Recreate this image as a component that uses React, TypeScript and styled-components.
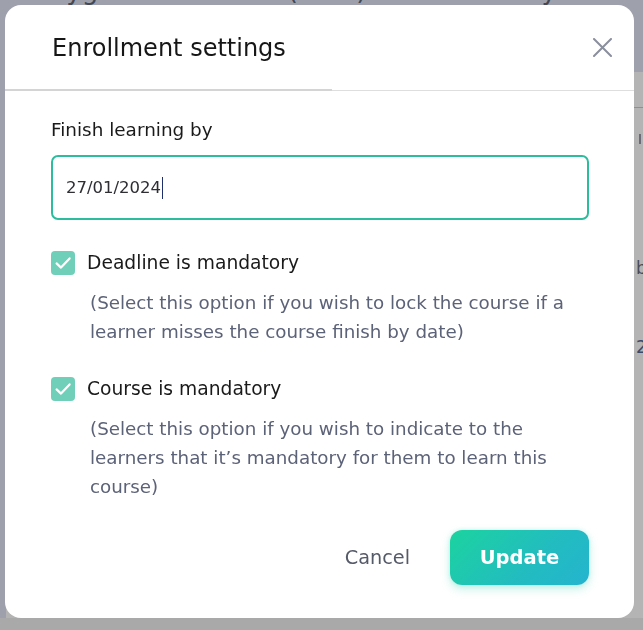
import React from "react";
import styled, { createGlobalStyle } from "styled-components";

const GlobalStyle = createGlobalStyle`
  html, body { margin: 0; padding: 0; }
  body {
    width: 643px;
    height: 630px;
    overflow: hidden;
    font-family: "DejaVu Sans", "Noto Sans", Arial, sans-serif;
  }
  * { box-sizing: border-box; }
`;

/* ---------- page behind the dialog (already dimmed) ---------- */
const Page = styled.div`
  width: 643px;
  height: 630px;
  display: grid;
  grid-template-columns: 6px 628px 1fr;
  grid-template-rows: 72px 546px 1fr;
  background: #a9a9aa;
  overflow: hidden;
`;

const TopBand = styled.div`
  grid-column: 1 / -1;
  grid-row: 1;
  background: #9ea1ab;
  overflow: hidden;
  white-space: nowrap;
`;

const PageHeading = styled.h1`
  margin: -27px 0 0 -30px;
  font-family: "DejaVu Sans", Arial, sans-serif;
  font-size: 26px;
  line-height: 34px;
  font-weight: 400;
  color: #454853;
`;

const LeftRail = styled.div`
  grid-column: 1;
  grid-row: 2;
  background: #9ea1ab;
`;

const MainArea = styled.div`
  grid-column: 2;
  grid-row: 2;
  background: #b4b4b4;
`;

const SidePanel = styled.div`
  grid-column: 3;
  grid-row: 2;
  background: #b4b4b4;
  display: flex;
  flex-direction: column;
  padding-top: 35px;
  overflow: hidden;
  white-space: nowrap;
`;

const SideRule = styled.div`
  height: 1px;
  background: #8f8f92;
`;

const SideTick = styled.div`
  margin: 26px 0 0 5px;
  width: 2px;
  height: 10px;
  background: #6a6d78;
`;

const SideText = styled.div<{ $top: number; $color?: string }>`
  margin-top: ${(p) => p.$top}px;
  padding-left: 2px;
  font-size: 17px;
  color: ${(p) => p.$color || "#4a4c55"};
  line-height: 20px;
`;

const BottomStrip = styled.div`
  grid-column: 1 / -1;
  grid-row: 3;
  background: #a9a9aa;
`;

/* ---------- overlay + dialog ---------- */
const Overlay = styled.div`
  position: fixed;
  inset: 0;
  padding: 5px 9px 12px 5px;
  display: flex;
`;

const Dialog = styled.div`
  flex: 1;
  background: #ffffff;
  border-radius: 16px;
  display: flex;
  flex-direction: column;
  overflow: hidden;
`;

const Header = styled.div`
  position: relative;
  height: 86px;
  padding: 0 20px 0 47px;
  display: flex;
  align-items: center;
  justify-content: space-between;
  border-bottom: 1px solid #dedede;
  &::after {
    content: "";
    position: absolute;
    left: 0;
    bottom: -1px;
    width: 327px;
    height: 2px;
    background: #d4d4d4;
  }
`;

const Title = styled.h2`
  margin: 0;
  font-size: 24px;
  font-weight: 400;
  color: #161616;
`;

const CloseButton = styled.button`
  border: 0;
  background: transparent;
  padding: 0;
  width: 24px;
  height: 24px;
  display: flex;
  align-items: center;
  justify-content: center;
  cursor: pointer;
`;

const Body = styled.div`
  padding: 25px 45px 0 46px;
  display: flex;
  flex-direction: column;
`;

const FieldLabel = styled.div`
  font-size: 18.4px;
  line-height: 28px;
  color: #1a1a1a;
  margin-bottom: 11px;
`;

const DateField = styled.div`
  height: 65px;
  border: 2px solid #2bbd9e;
  border-radius: 7px;
  padding: 0 13px;
  display: flex;
  align-items: center;
  font-size: 16.5px;
  color: #2e2e33;
`;

const Caret = styled.span`
  display: inline-block;
  width: 1px;
  height: 22px;
  background: #1e2f6b;
  margin-left: 1px;
`;

const OptionRow = styled.label<{ $mt: number }>`
  margin-top: ${(p) => p.$mt}px;
  display: flex;
  align-items: center;
  gap: 12px;
  font-size: 18.7px;
  color: #1a1a1a;
  line-height: 24px;
  cursor: pointer;
`;

const Box = styled.span`
  width: 24px;
  height: 24px;
  border-radius: 4px;
  background: #6fcfb8;
  display: flex;
  align-items: center;
  justify-content: center;
  flex: none;
`;

const Hint = styled.p`
  margin: 13px 0 0 39px;
  font-size: 18.3px;
  line-height: 29px;
  color: #5c6278;
`;

const Footer = styled.div`
  margin-top: auto;
  padding: 0 45px 33px 0;
  display: flex;
  justify-content: flex-end;
  align-items: center;
  gap: 40px;
`;

const CancelButton = styled.button`
  border: 0;
  background: transparent;
  font-family: inherit;
  font-size: 19.3px;
  font-weight: 400;
  color: #555a68;
  padding: 0;
  cursor: pointer;
`;

const UpdateButton = styled.button`
  width: 139px;
  height: 55px;
  border: 0;
  border-radius: 12px;
  background: linear-gradient(135deg, #1cd39f 0%, #22bcc0 60%, #24b4cf 100%);
  box-shadow: 0 4px 10px rgba(40, 205, 175, 0.28), 0 0 4px rgba(40, 205, 175, 0.2);
  font-family: inherit;
  font-size: 19.5px;
  font-weight: 700;
  color: #ffffff;
  cursor: pointer;
`;

const Check = () => (
  <svg width="18" height="18" viewBox="0 0 18 18" fill="none">
    <path d="M2.6 9.4 L7 13.6 L15.6 4.4" stroke="#ffffff" strokeWidth="2.2" strokeLinecap="round" strokeLinejoin="round" />
  </svg>
);

const CloseIcon = () => (
  <svg width="19" height="19" viewBox="0 0 19 19" fill="none">
    <path d="M1 1 L18 18 M18 1 L1 18" stroke="#8a8f9e" strokeWidth="2" strokeLinecap="round" />
  </svg>
);

export default function App() {
  return (
    <>
      <GlobalStyle />
      <Page>
        <TopBand>
          <PageHeading>Good Hygiene Practices (GMP) &amp; Food Safety</PageHeading>
        </TopBand>
        <LeftRail />
        <MainArea />
        <SidePanel>
          <SideRule />
          <SideTick />
          <SideText $top={114}>b</SideText>
          <SideText $top={59} $color="#3c4a6a">20</SideText>
        </SidePanel>
        <BottomStrip />
      </Page>
      <Overlay>
        <Dialog role="dialog" aria-label="Enrollment settings">
          <Header>
            <Title>Enrollment settings</Title>
            <CloseButton aria-label="Close">
              <CloseIcon />
            </CloseButton>
          </Header>
          <Body>
            <FieldLabel>Finish learning by</FieldLabel>
            <DateField role="textbox">
              27/01/2024
              <Caret />
            </DateField>
            <OptionRow $mt={31}>
              <Box>
                <Check />
              </Box>
              Deadline is mandatory
            </OptionRow>
            <Hint>
              (Select this option if you wish to lock the course if a learner misses the course finish by date)
            </Hint>
            <OptionRow $mt={31}>
              <Box>
                <Check />
              </Box>
              Course is mandatory
            </OptionRow>
            <Hint>
              (Select this option if you wish to indicate to the learners that it’s mandatory for them to learn this
              course)
            </Hint>
          </Body>
          <Footer>
            <CancelButton>Cancel</CancelButton>
            <UpdateButton>Update</UpdateButton>
          </Footer>
        </Dialog>
      </Overlay>
    </>
  );
}
